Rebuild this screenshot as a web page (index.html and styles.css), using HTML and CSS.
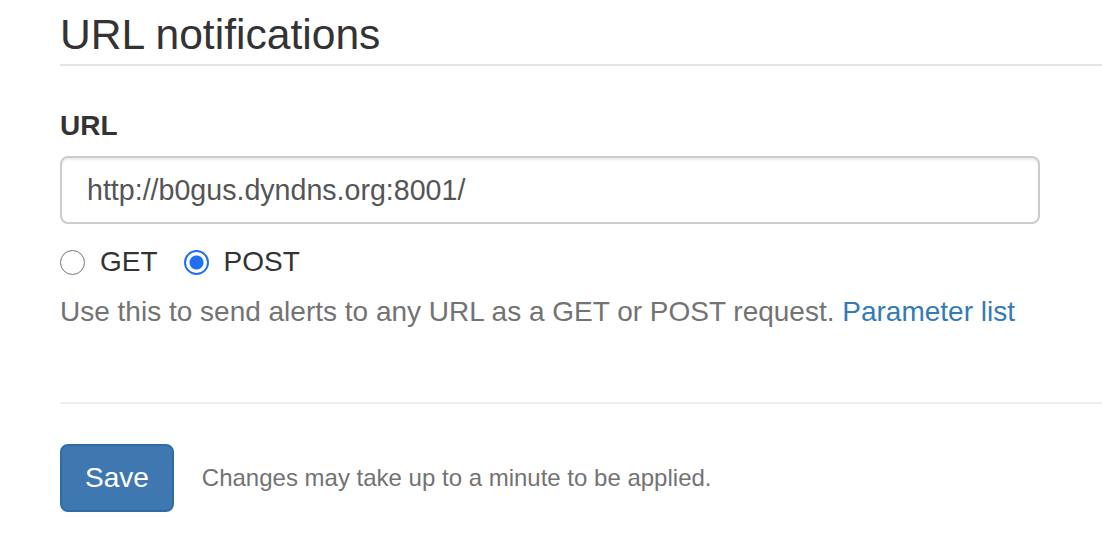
FILE: index.html
```html
<!DOCTYPE html>
<html>
<head>
<meta charset="utf-8">
<link rel="stylesheet" href="styles.css">
</head>
<body>
<div class="page">
  <form class="settings">
    <fieldset class="fs">
      <legend class="legend">URL notifications</legend>
      <div class="form-group">
        <label class="label" for="url">URL</label>
        <input class="input" id="url" type="text" value="http://b0gus.dyndns.org:8001/">
        <div class="radios">
          <label class="radio-inline"><input class="radio" type="radio" name="method"> GET</label>
          <label class="radio-inline"><input class="radio" type="radio" name="method" checked> POST</label>
        </div>
        <p class="help">Use this to send alerts to any URL as a GET or POST request. <a class="link" href="#">Parameter list</a></p>
      </div>
    </fieldset>
    <hr class="divider">
    <div class="actions">
      <button class="btn" type="button">Save</button>
      <span class="note">Changes may take up to a minute to be applied.</span>
    </div>
  </form>
</div>
</body>
</html>
```

FILE: styles.css
```css
html, body {
  margin: 0;
  padding: 0;
  background: #fff;
  overflow: hidden;
}
body {
  font-family: "Liberation Sans", Arial, Helvetica, sans-serif;
  font-size: 28px;
  line-height: 40px;
  color: #333;
}
.page {
  padding: 4px 0 0 60px;
}
.fs {
  border: 0;
  margin: 0;
  padding: 0;
  min-width: 0;
}
.legend {
  display: block;
  width: 100%;
  padding: 0;
  margin: 0 0 40px 0;
  font-size: 42.6px;
  line-height: 60px;
  color: #333;
  border-bottom: 2px solid #e5e5e5;
}
.form-group {
  margin-bottom: 30px;
}
.label {
  display: block;
  font-weight: bold;
  margin-bottom: 10px;
}
.input {
  display: block;
  box-sizing: border-box;
  width: 980px;
  height: 68px;
  padding: 12px 25px;
  font-family: inherit;
  font-size: 28.6px;
  line-height: 40px;
  color: #555;
  background: #fff;
  border: 2px solid #ccc;
  border-radius: 8px;
  box-shadow: inset 0 2px 2px rgba(0,0,0,0.075);
  margin: 0;
  outline: none;
}
.radios {
  display: flex;
  gap: 26px;
  margin-top: 18px;
  height: 40px;
}
.radio-inline {
  display: flex;
  align-items: center;
  gap: 15px;
  cursor: pointer;
}
.radio {
  appearance: none;
  -webkit-appearance: none;
  box-sizing: border-box;
  width: 25px;
  height: 25px;
  margin: 0;
  border: 1.5px solid #767676;
  border-radius: 50%;
  background: #fff;
}
.radio:checked {
  border: 2.5px solid #1f6ff0;
  background: radial-gradient(circle, #1f6ff0 0 6.5px, #fff 7.5px);
}
.help {
  margin: 10px 0 0 0;
  color: #737373;
}
.link {
  color: #337ab7;
  text-decoration: none;
}
.divider {
  margin: 40px 0;
  border: 0;
  border-top: 2px solid #eee;
  height: 0;
}
.actions {
  display: flex;
  align-items: center;
  gap: 28px;
}
.btn {
  box-sizing: border-box;
  height: 68px;
  padding: 12px 23px;
  font-family: inherit;
  font-size: 28px;
  line-height: 40px;
  color: #fff;
  background: #3f78b1;
  border: 2px solid #2e6da4;
  border-radius: 8px;
  cursor: pointer;
}
.note {
  font-size: 24px;
  color: #737373;
}
```
